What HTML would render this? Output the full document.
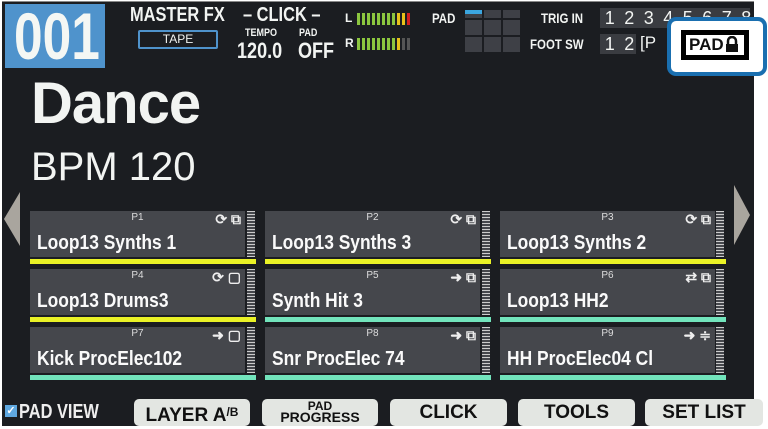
<!DOCTYPE html>
<html><head><meta charset="utf-8"><style>
*{margin:0;padding:0;box-sizing:border-box}
body{width:768px;height:426px;background:#fff;position:relative;overflow:hidden;font-family:"Liberation Sans",sans-serif;font-weight:bold;color:#f2f4f2}
.a{position:absolute;white-space:nowrap}
.n{transform:scaleX(.82);transform-origin:left top}
#scr{left:2px;top:1px;width:752px;height:425px;background:#1b1d21;border-top:1px solid #888}
.pad{position:absolute;width:215px;height:46px;background:#45474c}
.pl{position:absolute;top:1px;left:0;width:215px;text-align:center;font-size:10px;font-weight:normal;color:#ddd}
.pn{position:absolute;left:7px;top:21px;font-size:20px;white-space:nowrap;color:#fafafa;transform:scaleX(.87);transform-origin:left top}
.ic{position:absolute;right:4px;top:0px;font-size:14px;color:#eee}
.mt{position:absolute;width:8px;height:46px;background:repeating-linear-gradient(#ccc 0 1px,#45474c 1px 3px)}
.ul{position:absolute;width:226px;height:5px}
.btn{position:absolute;top:399px;height:27px;background:#e3e6e2;border-radius:5px;color:#111;font-size:19px;text-align:center;line-height:27px}
.bar{display:inline-block;width:3px;height:12px;margin-right:2px;background:#8cc63f}
.d{display:inline-block;width:19.5px;text-align:center}
</style></head><body>
<div id="scr" class="a"></div>
<div class="a" style="left:5px;top:4px;width:100px;height:64px;background:#4f93cc;overflow:hidden"><div class="n" style="color:#f4f7f4;font-size:66px;line-height:64px;margin-left:9px;transform:scaleX(.78)">001</div></div>
<div class="a n" style="left:130px;top:4px;font-size:20px">MASTER FX</div>
<div class="a" style="left:138px;top:30px;width:80px;height:19px;border:2px solid #4f93cc;border-radius:2px;font-size:12px;text-align:center;line-height:15px;font-weight:normal">TAPE</div>
<div class="a n" style="left:243px;top:4px;font-size:20px">– CLICK –</div>
<div class="a n" style="left:245px;top:27px;font-size:11px">TEMPO</div>
<div class="a n" style="left:299px;top:27px;font-size:11px">PAD</div>
<div class="a n" style="left:237px;top:38px;font-size:22px">120.0</div>
<div class="a n" style="left:298px;top:38px;font-size:22px">OFF</div>
<div class="a" style="left:345px;top:11px;font-size:12px">L</div>
<div class="a" style="left:345px;top:36px;font-size:12px">R</div>
<div class="a" style="left:357px;top:13px;font-size:0"><span class="bar"></span><span class="bar"></span><span class="bar"></span><span class="bar"></span><span class="bar"></span><span class="bar"></span><span class="bar"></span><span class="bar"></span><span class="bar" style="background:#e8c21a"></span><span class="bar" style="background:#e8c21a"></span><span class="bar" style="background:#d42020"></span></div>
<div class="a" style="left:357px;top:38px;font-size:0"><span class="bar"></span><span class="bar"></span><span class="bar"></span><span class="bar"></span><span class="bar"></span><span class="bar"></span><span class="bar"></span><span class="bar"></span><span class="bar" style="background:#e8c21a"></span><span class="bar" style="background:#555"></span><span class="bar" style="background:#555"></span></div>
<div class="a n" style="left:432px;top:10px;font-size:14px">PAD</div>
<svg class="a" style="left:465px;top:10px" width="56" height="44"><g fill="#3e4046"><rect x="0" y="0" width="17" height="8"/><rect x="19" y="0" width="17" height="8"/><rect x="38" y="0" width="17" height="8"/><rect x="0" y="10" width="17" height="15"/><rect x="19" y="10" width="17" height="15"/><rect x="38" y="10" width="17" height="15"/><rect x="0" y="27" width="17" height="15"/><rect x="19" y="27" width="17" height="15"/><rect x="38" y="27" width="17" height="15"/></g><rect x="0" y="0" width="17" height="4" fill="#3ba6e0"/></svg>
<div class="a n" style="left:541px;top:10px;font-size:14px">TRIG IN</div>
<div class="a" style="left:600px;top:8px;width:150px;height:20px;background:#3a3c41;font-size:18px;font-weight:normal;line-height:20px"><span class="d">1</span><span class="d">2</span><span class="d">3</span><span class="d">4</span><span class="d">5</span><span class="d">6</span><span class="d">7</span><span class="d">8</span></div>
<div class="a n" style="left:530px;top:36px;font-size:14px">FOOT SW</div>
<div class="a" style="left:600px;top:34px;width:36px;height:20px;background:#3a3c41;font-size:18px;font-weight:normal;line-height:20px"><span class="d">1</span><span class="d">2</span></div>
<div class="a" style="left:640px;top:33px;font-size:17px;font-weight:normal">[P</div>
<div class="a" style="left:667px;top:17px;width:100px;height:59px;background:#1a6fb0;border-radius:9px;padding:4px"><div style="width:100%;height:100%;background:#fff;border-radius:5px;padding:9px 8px 0 10px"><div style="width:68px;height:30px;background:#000;padding:5px"><div style="background:#fff;height:20px;color:#111;font-size:17px;line-height:20px;padding-left:3px">PAD<svg width="16" height="16" style="vertical-align:-2px"><path d="M4 8V5a4 4 0 0 1 8 0v3" stroke="#111" stroke-width="2.5" fill="none"/><rect x="2" y="8" width="12" height="8" fill="#111"/></svg></div></div></div></div>
<div class="a" style="left:31px;top:70px;font-size:58px;letter-spacing:-1px">Dance</div>
<div class="a" style="left:31px;top:145px;font-size:40px;font-weight:normal">BPM 120</div>
<svg class="a" style="left:4px;top:192px" width="18" height="54"><path d="M16 0L0 27L16 54Z" fill="#a9a59e"/></svg>
<svg class="a" style="left:734px;top:185px" width="18" height="60"><path d="M0 0L16 30L0 60Z" fill="#a9a59e"/></svg>

<div class="pad" style="left:30px;top:211px"><div class="pl">P1</div><div class="ic">⟳ ⧉</div><div class="pn">Loop13 Synths 1</div></div><div class="mt" style="left:247px;top:211px"></div><div class="ul" style="left:30px;top:259px;background:#eaf226"></div>
<div class="pad" style="left:265px;top:211px"><div class="pl">P2</div><div class="ic">⟳ ⧉</div><div class="pn">Loop13 Synths 3</div></div><div class="mt" style="left:482px;top:211px"></div><div class="ul" style="left:265px;top:259px;background:#eaf226"></div>
<div class="pad" style="left:500px;top:211px"><div class="pl">P3</div><div class="ic">⟳ ⧉</div><div class="pn">Loop13 Synths 2</div></div><div class="mt" style="left:716px;top:211px"></div><div class="ul" style="left:500px;top:259px;background:#eaf226"></div>

<div class="pad" style="left:30px;top:269px"><div class="pl">P4</div><div class="ic">⟳ ▢</div><div class="pn">Loop13 Drums3</div></div><div class="mt" style="left:247px;top:269px"></div><div class="ul" style="left:30px;top:317px;background:#eaf226"></div>
<div class="pad" style="left:265px;top:269px"><div class="pl">P5</div><div class="ic">➜ ⧉</div><div class="pn">Synth Hit 3</div></div><div class="mt" style="left:482px;top:269px"></div><div class="ul" style="left:265px;top:317px;background:#72e4bc"></div>
<div class="pad" style="left:500px;top:269px"><div class="pl">P6</div><div class="ic">⇄ ⧉</div><div class="pn">Loop13 HH2</div></div><div class="mt" style="left:716px;top:269px"></div><div class="ul" style="left:500px;top:317px;background:#72e4bc"></div>

<div class="pad" style="left:30px;top:327px"><div class="pl">P7</div><div class="ic">➜ ▢</div><div class="pn">Kick ProcElec102</div></div><div class="mt" style="left:247px;top:327px"></div><div class="ul" style="left:30px;top:375px;background:#72e4bc"></div>
<div class="pad" style="left:265px;top:327px"><div class="pl">P8</div><div class="ic">➜ ⧉</div><div class="pn">Snr ProcElec 74</div></div><div class="mt" style="left:482px;top:327px"></div><div class="ul" style="left:265px;top:375px;background:#72e4bc"></div>
<div class="pad" style="left:500px;top:327px"><div class="pl">P9</div><div class="ic">➜ ≑</div><div class="pn">HH ProcElec04 Cl</div></div><div class="mt" style="left:716px;top:327px"></div><div class="ul" style="left:500px;top:375px;background:#72e4bc"></div>

<div class="a" style="left:5px;top:405px;width:12px;height:12px;background:#5fa8e0;color:#fff;font-size:11px;line-height:12px;text-align:center">✓</div>
<div class="a n" style="left:19px;top:401px;font-size:20px;color:#eee">PAD VIEW</div>
<div class="btn" style="left:134px;width:116px">LAYER A<span style="font-size:12px;vertical-align:5px">/B</span></div>
<div class="btn" style="left:262px;width:116px;font-size:12px;line-height:11px;padding-top:2px">PAD<br><span style="font-size:14px">PROGRESS</span></div>
<div class="btn" style="left:390px;width:117px">CLICK</div>
<div class="btn" style="left:518px;width:117px">TOOLS</div>
<div class="btn" style="left:645px;width:118px">SET LIST</div>
</body></html>
